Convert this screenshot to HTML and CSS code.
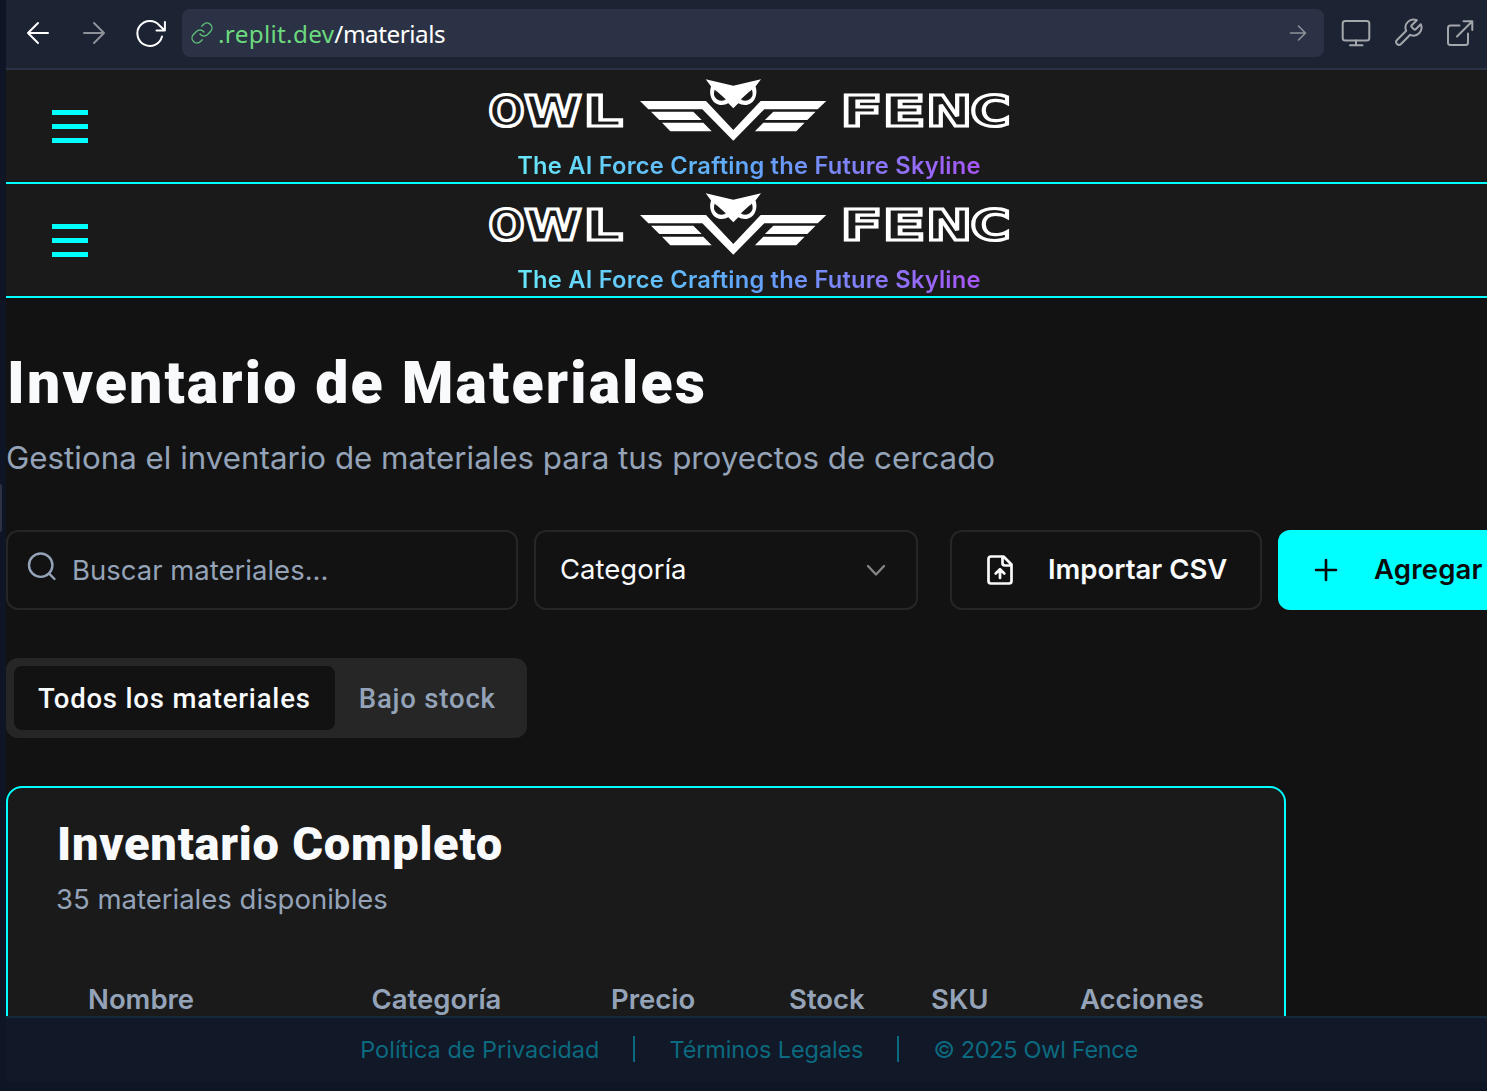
FILE: index.html
```html
<!DOCTYPE html>
<html lang="es">
<head>
<meta charset="utf-8">
<title>Inventario de Materiales</title>
<link rel="stylesheet" href="styles.css">
</head>
<body>
<div class="browser">
  <nav class="toolbar">
    <svg class="ico" viewBox="0 0 32 32"><path d="M26 16H6.500M16 6L6 16L16 26"/></svg>
    <svg class="ico dim" viewBox="0 0 32 32"><path d="M6 16H25.500M16 6L26 16L16 26"/></svg>
    <svg class="ico" viewBox="0 0 32 32"><path d="M28 19.500A12.500 12.500 0 1 1 25.500 8.500L30.500 13.200M30.900 5V13.500H22.500"/></svg>
    <div class="url">
      <svg class="link" viewBox="0 0 24 24"><path d="M10 13a5 5 0 0 0 7.540.54l3-3a5 5 0 0 0-7.070-7.070l-1.720 1.710M14 11a5 5 0 0 0-7.540-.54l-3 3a5 5 0 0 0 7.070 7.070l1.710-1.710"/></svg>
      <span class="host">.replit.dev</span><span class="path">/materials</span>
      <svg class="go" viewBox="0 0 20 20"><path d="M2.500 10H17M10.500 3L17.500 10L10.500 17"/></svg>
    </div>
    <div class="tools">
      <svg class="ico" viewBox="0 0 32 32"><rect x="2.700" y="4" width="26.600" height="19.500" rx="2.500"/><path d="M16 23.500V28M10 28.200H22.500"/></svg>
      <svg class="ico" viewBox="0 0 32 32"><path transform="translate(.2 -.1) scale(1.33)" stroke-width="1.500" d="M14.700 6.300a1 1 0 0 0 0 1.400l1.600 1.600a1 1 0 0 0 1.400 0l3.770-3.770a6 6 0 0 1-7.940 7.940l-6.910 6.910a2.120 2.120 0 0 1-3-3l6.910-6.910a6 6 0 0 1 7.940-7.940l-3.760 3.760z"/></svg>
      <svg class="ico" viewBox="0 0 32 32"><path d="M15.500 8.500H6.500a2.500 2.500 0 0 0-2.500 2.500V25.500a2.500 2.500 0 0 0 2.500 2.500H21.500a2.500 2.500 0 0 0 2.500-2.500V16.500M19.500 4.200H28.300V13M28 4.500L13 19.500"/></svg>
    </div>
  </nav>

  <div class="page">
    <header class="brand">
      <button class="menu" aria-label="Menú"><i></i><i></i><i></i></button>
      <div class="brandmark">
        <svg class="logo" viewBox="480 70 540 80">
          <g class="wordmark">
            <text x="488.500" y="126" textLength="36" lengthAdjust="spacingAndGlyphs">O</text>
            <text x="524.500" y="126" textLength="57" lengthAdjust="spacingAndGlyphs">W</text>
            <text x="583.500" y="126" textLength="39" lengthAdjust="spacingAndGlyphs">L</text>
            <text x="840.500" y="126" textLength="42" lengthAdjust="spacingAndGlyphs">F</text>
            <text x="882.500" y="126" textLength="43" lengthAdjust="spacingAndGlyphs">E</text>
            <text x="926" y="126" textLength="46" lengthAdjust="spacingAndGlyphs">N</text>
            <text x="970.500" y="126" textLength="40" lengthAdjust="spacingAndGlyphs">C</text>
          </g>
          <g id="owl">
            <path class="white" d="M640 101H706L733.300 130L760.700 101H826.300L817.700 109.300H764.300L733.300 140.700L702.300 109.300H648.300ZM651 111.700H693.300L701.700 120H659.300ZM662 122.700H703.300L711.700 131.300H670.300ZM815.600 111.700H773.300L764.900 120H807.300ZM804.600 122.700H763.300L754.900 131.300H796.300Z"/>
            <path class="white" d="M705.700 79.300L733.300 85.700L761 79.300L755.500 86.500C758.500 95 754 105 745 105Q741 105 738.300 103.200L733.300 108.300L728.300 103.200Q725.600 105 721.600 105C712.600 105 708.100 95 711.100 86.500Z"/>
            <path class="eye" d="M714.800 89.500L718 93.500Q719.500 97.800 725.800 99.800Q720 102.300 716.300 98.800Q712.500 95 714.800 89.500ZM751.800 89.500L748.600 93.500Q747.100 97.800 740.800 99.800Q746.600 102.300 750.300 98.800Q754.100 95 751.800 89.500Z"/>
            <path class="eye" d="M716 90.500L726 99.500L719 99ZM750.600 90.500L740.600 99.500L747.600 99Z"/>
          </g>
        </svg>
        <p class="tagline"><span>The AI Force Crafting the Future Skyline</span></p>
      </div>
    </header>
    <header class="brand">
      <button class="menu" aria-label="Menú"><i></i><i></i><i></i></button>
      <div class="brandmark">
        <svg class="logo" viewBox="480 70 540 80">
          <g class="wordmark">
            <text x="488.500" y="126" textLength="36" lengthAdjust="spacingAndGlyphs">O</text>
            <text x="524.500" y="126" textLength="57" lengthAdjust="spacingAndGlyphs">W</text>
            <text x="583.500" y="126" textLength="39" lengthAdjust="spacingAndGlyphs">L</text>
            <text x="840.500" y="126" textLength="42" lengthAdjust="spacingAndGlyphs">F</text>
            <text x="882.500" y="126" textLength="43" lengthAdjust="spacingAndGlyphs">E</text>
            <text x="926" y="126" textLength="46" lengthAdjust="spacingAndGlyphs">N</text>
            <text x="970.500" y="126" textLength="40" lengthAdjust="spacingAndGlyphs">C</text>
          </g>
          <use href="#owl"/>
        </svg>
        <p class="tagline"><span>The AI Force Crafting the Future Skyline</span></p>
      </div>
    </header>

    <main class="content">
      <h1>Inventario de Materiales</h1>
      <p class="lead">Gestiona el inventario de materiales para tus proyectos de cercado</p>

      <div class="filters">
        <div class="field search">
          <svg viewBox="0 0 32 32"><circle cx="14.700" cy="15.200" r="11.700"/><path d="M23.200 23.700L28.500 29"/></svg>
          <span>Buscar materiales...</span>
        </div>
        <div class="field select">
          <span>Categoría</span>
          <svg viewBox="0 0 24 24"><path d="M4 8L12 16.500L20 8"/></svg>
        </div>
        <button class="field import">
          <svg viewBox="0 0 32 32"><path d="M19.500 2.500H7a2.500 2.500 0 0 0-2.500 2.500V27a2.500 2.500 0 0 0 2.500 2.500H25a2.500 2.500 0 0 0 2.500-2.500V10.500ZM18.500 2.500V9a2.500 2.500 0 0 0 2.500 2.500H27.500M16 24V16M11.700 19.500L16 15.300L20.300 19.500"/></svg>
          <span>Importar CSV</span>
        </button>
        <button class="add">
          <svg viewBox="0 0 24 24"><path d="M12 2V22M2 12H22"/></svg>
          <span>Agregar</span>
        </button>
      </div>

      <div class="tabs">
        <div class="tab active"><span>Todos los materiales</span></div>
        <div class="tab"><span>Bajo stock</span></div>
      </div>

      <section class="card">
        <h2>Inventario Completo</h2>
        <p class="count">35 materiales disponibles</p>
        <div class="thead">
          <span>Nombre</span><span>Categoría</span><span>Precio</span><span>Stock</span><span>SKU</span><span>Acciones</span>
        </div>
      </section>
    </main>

    <footer class="legal">
      <span>Política de Privacidad</span><i></i><span class="terms">Términos Legales</span><i></i><span class="copy">© 2025 Owl Fence</span>
    </footer>
  </div>
</div>
<div class="grip"></div>
</body>
</html>
```
FILE: styles.css
```css
* { box-sizing: border-box; margin: 0; }
html, body { height: 1091px; overflow: hidden; }
body { background: #0e1525; color: #f8fafc; font-family: Inter, "Liberation Sans", sans-serif; }
button { border: 0; background: none; color: inherit; font: inherit; padding: 0; }
svg { fill: none; flex: none; stroke-linecap: round; stroke-linejoin: round; }
.browser { margin-left: 6px; width: 1486px; height: 1082px; display: flex; flex-direction: column; }

.toolbar { height: 70px; flex: none; background: #1c2333; border-bottom: 2px solid #2b3245; display: flex; align-items: center; gap: 24px; padding: 0 0 2px 16px; }
.ico { width: 32px; height: 32px; stroke: #fff; stroke-width: 2; }
.ico.dim { stroke: #8d9299; }
.url { margin-left: -8px; width: 1142px; height: 48px; border-radius: 8px; background: #2b3245; display: flex; align-items: center; padding: 0 16px 0 8px; font: 24.300px/48px "Noto Sans", sans-serif; }
.url span { padding-top: 1px; }
.link { width: 24px; height: 24px; stroke: #5fbf78; stroke-width: 1.400; margin-right: 4px; }
.host { color: #6bd97e; letter-spacing: .3px; }
.path { color: #fff; letter-spacing: -.5px; }
.go { width: 20px; height: 20px; stroke: #8d9299; stroke-width: 1.600; margin-left: auto; }
.tools { display: flex; gap: 20px; margin-left: -8px; }
.tools .ico { stroke: #a3a6ab; }

.page { flex: 1; min-height: 0; background: #121212; display: flex; flex-direction: column; }
.brand { height: 114px; flex: none; background: #1a1a1a; border-bottom: 2px solid #0ff; display: grid; grid-template-columns: 128px 1fr 128px; }
.menu { margin: 40px 0 0 46px; width: 36px; display: flex; flex-direction: column; gap: 9.500px; }
.menu i { height: 4.500px; background: #0ff; }
.brandmark { display: flex; flex-direction: column; align-items: center; }
.logo { width: 540px; height: 80px; margin-left: 2px; overflow: visible; }
.wordmark { font: bold 42.500px "DejaVu Sans", sans-serif; fill: #1a1a1a; stroke: #fff; stroke-width: 3.200; stroke-linejoin: miter; }
.white { fill: #fff; }
.eye { fill: #1a1a1a; }
.tagline { font-size: 23.700px; line-height: 32px; font-weight: 600; letter-spacing: .220px; white-space: nowrap; }
.tagline span { background: linear-gradient(90deg, #67e8f9, #60a5fa 50%, #a855f7); -webkit-background-clip: text; background-clip: text; color: transparent; }

.content { flex: 1; min-height: 0; overflow: hidden; padding-top: 50px; }
h1, h2 { font-family: Roboto, sans-serif; font-weight: 900; white-space: nowrap; }
h1 { font-size: 59px; line-height: 70px; letter-spacing: 2.140px; padding-left: 1px; }
.lead { margin-top: 18px; font-size: 31.300px; line-height: 44px; color: #94a3b8; white-space: nowrap; }
.filters { margin-top: 50px; display: flex; font-size: 27.500px; }
.field, .add { height: 80px; flex: none; border-radius: 12px; display: flex; align-items: center; white-space: nowrap; }
.field { border: 2px solid #262626; }
.search { width: 512px; padding-left: 18px; color: #94a3b8; }
.search svg { width: 32px; height: 32px; stroke: #94a3b8; stroke-width: 2.400; margin: -8px 14px 0 0; }
.select { width: 384px; margin-left: 16px; padding: 0 28px 0 24px; justify-content: space-between; }
.select svg { width: 24px; height: 24px; stroke: #858585; stroke-width: 2.400; }
.select span, .import span, .add span { padding-bottom: 2px; }
.import { width: 312px; margin-left: 32px; padding-left: 32px; font-weight: 600; }
.import svg { width: 32px; height: 32px; stroke: #f8fafc; stroke-width: 2.700; margin-right: 32px; }
.add { width: 340px; margin-left: 16px; padding-left: 36px; background: #0ff; color: #0a0a0a; font-weight: 600; letter-spacing: .200px; }
.add svg { width: 24px; height: 24px; stroke: #0a0a0a; stroke-width: 2.600; margin-right: 36px; }

.tabs { margin-top: 48px; width: 521px; height: 80px; padding: 8px; border-radius: 12px; background: #262626; display: flex; font: 500 27.500px Roboto, sans-serif; color: #94a3b8; }
.tab { padding: 0 24px; display: flex; align-items: center; white-space: nowrap; letter-spacing: .820px; }
.tab.active { width: 321px; background: #121212; color: #f8fafc; border-radius: 8px; }
.card { margin-top: 48px; width: 1280px; height: 500px; background: #1a1a1a; border: 2px solid #0ff; border-radius: 16px; padding: 26px 48px; }
h2 { font-size: 47px; line-height: 60px; letter-spacing: .760px; padding-left: 1px; }
.count { margin-top: 9px; font-size: 27.500px; line-height: 32px; color: #94a3b8; }
.thead { margin-top: 68px; padding-left: 32px; display: grid; grid-template-columns: 283.500px 239.500px 178px 142px 149px auto; font-size: 27.500px; line-height: 32px; font-weight: 600; color: #94a3b8; }

.legal { height: 66px; flex: none; background: #111827; border-top: 2px solid #122a3a; display: flex; align-items: center; justify-content: center; padding-bottom: 2px; font-size: 23.500px; color: #0c6a80; white-space: nowrap; }
.legal i { width: 2px; height: 26px; background: #0c6a80; margin: 0 34px; }
.legal .terms { letter-spacing: -.120px; }
.legal .copy { letter-spacing: -.330px; }
.grip { position: absolute; left: 0; top: 484px; width: 2px; height: 48px; background: #2b3245; border-radius: 0 2px 2px 0; }
```
